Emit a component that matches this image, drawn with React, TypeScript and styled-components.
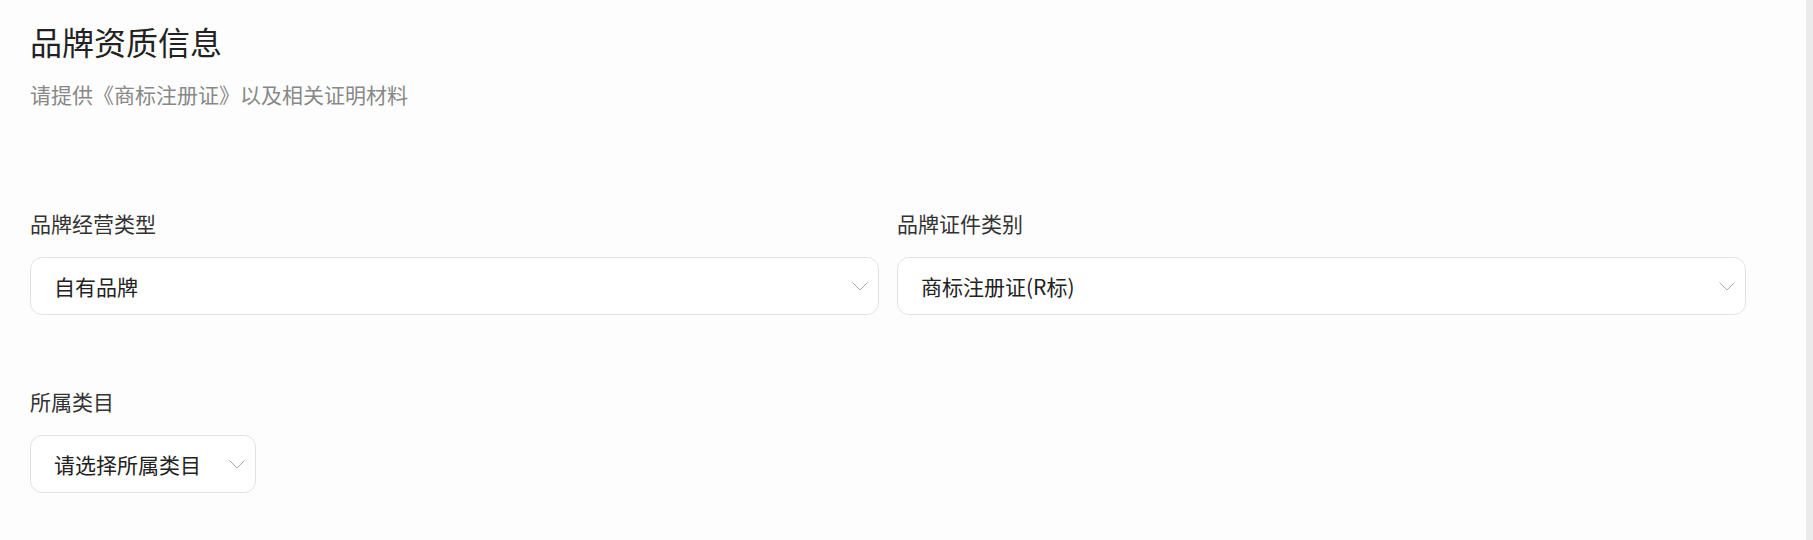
import { FC } from 'react'
import styled, { createGlobalStyle } from 'styled-components'

const GlobalStyle = createGlobalStyle`
  html, body {
    margin: 0;
    padding: 0;
    background: #fdfdfd;
  }
  body {
    font-family: 'Noto Sans CJK SC', 'Noto Sans', sans-serif;
    color: #222222;
  }
`

const Page = styled.div`
  display: flex;
  width: 100%;
  height: 540px;
  overflow: hidden;
`

const Main = styled.div`
  flex: 1;
  padding: 19px 60px 0 30px;
  box-sizing: border-box;
`

const ScrollTrack = styled.div`
  width: 7px;
  background: #ebebeb;
`

const Title = styled.h1`
  margin: 0;
  font-size: 32px;
  line-height: 44px;
  font-weight: 400;
  color: #222222;
`

const Subtitle = styled.p`
  margin: 16px 0 0;
  font-size: 21px;
  line-height: 30px;
  color: #888888;
`

const Row = styled.div<{ $top: number }>`
  display: grid;
  grid-template-columns: 1fr 1fr;
  column-gap: 18px;
  margin-top: ${(p) => p.$top}px;
`

const Field = styled.div`
  display: flex;
  flex-direction: column;
  align-items: flex-start;
`

const Label = styled.div`
  font-size: 21px;
  line-height: 30px;
  color: #333333;
  margin-bottom: 19px;
`

const Select = styled.div<{ $full?: boolean }>`
  display: ${(p) => (p.$full ? 'flex' : 'inline-flex')};
  align-self: ${(p) => (p.$full ? 'stretch' : 'flex-start')};
  align-items: center;
  justify-content: space-between;
  gap: 28px;
  height: 58px;
  box-sizing: border-box;
  padding: 0 10px 0 23px;
  border: 1px solid #e2e2e2;
  border-radius: 12px;
  background: #ffffff;
  cursor: pointer;
`

const SelectText = styled.span`
  font-size: 21px;
  line-height: 30px;
  color: #222222;
  white-space: nowrap;
`

const Chevron = () => (
  <svg width="16" height="9" viewBox="0 0 16 9" fill="none">
    <path d="M0.5 0.5 L8 8 L15.5 0.5" stroke="#a8a8a8" strokeWidth="1" />
  </svg>
)

interface SelectProps {
  value: string
  full?: boolean
}

const SelectBox: FC<SelectProps> = ({ value, full }) => (
  <Select $full={full}>
    <SelectText>{value}</SelectText>
    <Chevron />
  </Select>
)

const App: FC = () => {
  return (
    <Page>
      <GlobalStyle />
      <Main>
        <Title>品牌资质信息</Title>
        <Subtitle>请提供《商标注册证》以及相关证明材料</Subtitle>
        <Row $top={99}>
          <Field>
            <Label>品牌经营类型</Label>
            <SelectBox value="自有品牌" full />
          </Field>
          <Field>
            <Label>品牌证件类别</Label>
            <SelectBox value="商标注册证(R标)" full />
          </Field>
        </Row>
        <Row $top={71}>
          <Field>
            <Label>所属类目</Label>
            <SelectBox value="请选择所属类目" />
          </Field>
        </Row>
      </Main>
      <ScrollTrack />
    </Page>
  )
}

export default App
